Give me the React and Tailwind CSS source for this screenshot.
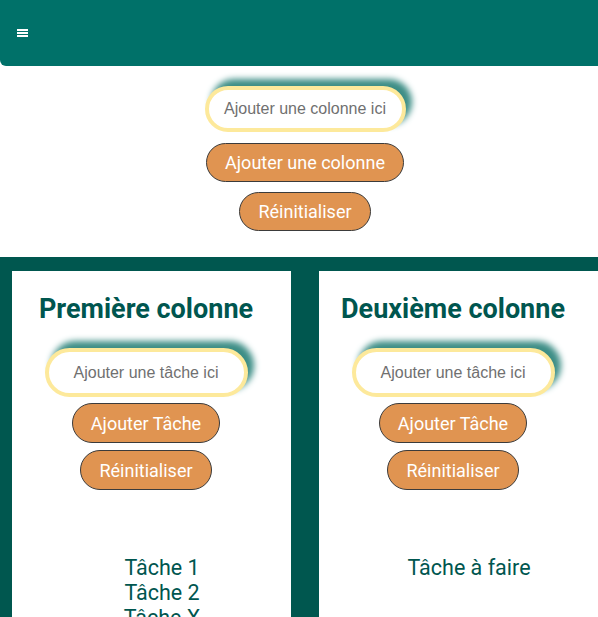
const columns = [
  { title: 'Première colonne', tasks: ['Tâche 1', 'Tâche 2', 'Tâche X', 'Tâche Y'] },
  { title: 'Deuxième colonne', tasks: ['Tâche à faire'] },
]

function OrangeButton({ children, className = '' }) {
  return (
    <button
      className={`rounded-full border border-[#3b3b3b] bg-[#e09451] px-[18px] text-[18px] text-white ${className}`}
      style={{ fontFamily: 'Roboto, sans-serif' }}
    >
      {children}
    </button>
  )
}

function Column({ title, tasks }) {
  return (
    <div className="flex h-[420px] w-[279px] shrink-0 flex-col items-center bg-white pr-[11px] pt-[22px]">
      <h2 className="text-[27px] font-bold leading-[32px] text-[#00564f]">{title}</h2>
      <input
        placeholder="Ajouter une tâche ici"
        className="mt-[23px] h-[49px] w-[203px] rounded-full border-4 border-[#fde99b] bg-white text-center text-[16px] text-[#333] shadow-[6px_-7px_6px_#3d8e86] outline-none placeholder:text-[#707070]"
        style={{ fontFamily: '"Liberation Sans", Arial, sans-serif' }}
      />
      <OrangeButton className="mt-[6px] h-[40px]">Ajouter Tâche</OrangeButton>
      <OrangeButton className="mt-[7px] h-[40px]">Réinitialiser</OrangeButton>
      <ul className="mt-[65px] w-full pl-[32px] text-center text-[21.5px] leading-[25px] text-[#00564f]">
        {tasks.map((t) => (
          <li key={t}>{t}</li>
        ))}
      </ul>
    </div>
  )
}

export default function App() {
  return (
    <div className="h-screen w-full overflow-hidden bg-white" style={{ fontFamily: 'Roboto, sans-serif' }}>
      <div className="w-[610px]">
        {/* header */}
        <header className="flex h-[66px] items-center rounded-bl-[6px] bg-[#007169] pl-[17px]">
          <div className="flex w-[11px] flex-col gap-[1px] -mt-[1px]">
            <span className="h-[2px] bg-white" />
            <span className="h-[2px] bg-white" />
            <span className="h-[2px] bg-white" />
          </div>
        </header>

        {/* add column */}
        <div className="flex flex-col items-center pt-[20px] pb-[26px]">
          <input
            placeholder="Ajouter une colonne ici"
            className="h-[46px] w-[201px] rounded-full border-4 border-[#fde99b] bg-white text-center text-[16px] text-[#333] shadow-[6px_-7px_6px_#3d8e86] outline-none placeholder:text-[#707070]"
            style={{ fontFamily: '"Liberation Sans", Arial, sans-serif' }}
          />
          <OrangeButton className="mt-[11px] h-[39px]">Ajouter une colonne</OrangeButton>
          <OrangeButton className="mt-[10px] h-[39px]">Réinitialiser</OrangeButton>
        </div>

        {/* columns */}
        <section className="flex gap-[28px] bg-[#00574f] px-[12px] pt-[14px]">
          {columns.map((c) => (
            <Column key={c.title} {...c} />
          ))}
        </section>
      </div>
    </div>
  )
}
